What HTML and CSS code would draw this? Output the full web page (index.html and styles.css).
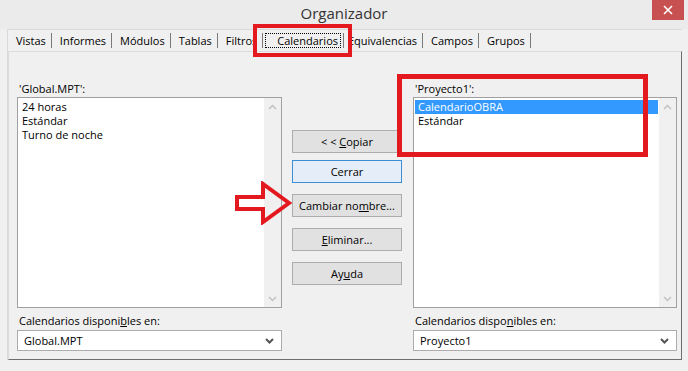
FILE: index.html
```html
<!DOCTYPE html>
<html lang="es">
<head>
<meta charset="utf-8">
<title>Organizador</title>
<link rel="stylesheet" href="styles.css">
</head>
<body>
<div class="window">
  <header class="titlebar">
    <span></span>
    <h1 class="title">Organizador</h1>
    <div class="close">
      <svg width="10" height="10" viewBox="0 0 10 10"><path d="M1 1 L9 9 M9 1 L1 9" stroke="#fff" stroke-width="1.6" fill="none"/></svg>
    </div>
  </header>
  <div class="frame">
    <nav class="tabs">
      <span class="tab">Vistas</span>
      <span class="tab">Informes</span>
      <span class="tab">Módulos</span>
      <span class="tab">Tablas</span>
      <span class="tab">Filtros</span>
      <span class="tab tab-active"><span class="focus">Calendarios</span></span>
      <span class="tab tab-after">Equivalencias</span>
      <span class="tab">Campos</span>
      <span class="tab">Grupos</span>
    </nav>
    <section class="panel">
      <div class="col">
        <div class="lbl">'Global.MPT':</div>
        <div class="listbox">
          <ul class="items">
            <li>24 horas</li>
            <li>Estándar</li>
            <li>Turno de noche</li>
          </ul>
          <div class="vscroll">
            <svg width="9" height="6" viewBox="0 0 9 6"><path d="M1 5 L4.5 1.5 L8 5" stroke="#c2c2c2" stroke-width="1.5" fill="none"/></svg>
            <svg width="9" height="6" viewBox="0 0 9 6"><path d="M1 1 L4.5 4.5 L8 1" stroke="#c2c2c2" stroke-width="1.5" fill="none"/></svg>
          </div>
        </div>
        <div class="lbl lbl-bottom">Calendarios disponi<u>b</u>les en:</div>
        <div class="combo">
          <span>Global.MPT</span>
          <svg width="9" height="6" viewBox="0 0 9 6"><path d="M1 1 L4.5 4.5 L8 1" stroke="#555" stroke-width="2" fill="none"/></svg>
        </div>
      </div>
      <div class="buttons">
        <div class="btn btn-first"><span>&lt; &lt; <u>C</u>opiar</span></div>
        <div class="btn btn-focus"><span>Cerrar</span></div>
        <div class="btn"><span>Cambiar no<u>m</u>bre...</span></div>
        <div class="btn"><span><u>E</u>liminar...</span></div>
        <div class="btn"><span>Ay<u>u</u>da</span></div>
      </div>
      <div class="col col-right">
        <div class="lbl">'Proyecto1':</div>
        <div class="listbox">
          <ul class="items">
            <li class="sel">CalendarioOBRA</li>
            <li>Estándar</li>
          </ul>
          <div class="vscroll">
            <svg width="9" height="6" viewBox="0 0 9 6"><path d="M1 5 L4.5 1.5 L8 5" stroke="#c2c2c2" stroke-width="1.5" fill="none"/></svg>
            <svg width="9" height="6" viewBox="0 0 9 6"><path d="M1 1 L4.5 4.5 L8 1" stroke="#c2c2c2" stroke-width="1.5" fill="none"/></svg>
          </div>
        </div>
        <div class="lbl lbl-bottom">Calendarios dispo<u>n</u>ibles en:</div>
        <div class="combo">
          <span>Proyecto1</span>
          <svg width="9" height="6" viewBox="0 0 9 6"><path d="M1 1 L4.5 4.5 L8 1" stroke="#555" stroke-width="2" fill="none"/></svg>
        </div>
      </div>
    </section>
  </div>
  <div class="mark mark-tab"></div>
  <div class="mark mark-list"></div>
  <svg class="arrow" width="60" height="44" viewBox="0 0 60 44"><polygon points="3,16 29,16 29,3 55,22 29,41 29,28 3,28" fill="none" stroke="#e3191f" stroke-width="4"/></svg>
</div>
</body>
</html>
```

FILE: styles.css
```css
html, body {
  margin: 0;
  padding: 0;
}
body {
  width: 688px;
  height: 371px;
  overflow: hidden;
  background: #f0f0f0;
  font-family: "Open Sans", "Noto Sans", sans-serif;
  font-size: 11px;
  color: #000;
}
.window {
  position: relative;
  height: 371px;
  display: flex;
  flex-direction: column;
}
.titlebar {
  height: 29px;
  display: grid;
  grid-template-columns: 1fr auto 1fr;
  align-items: start;
  background: #ebebeb;
}
.title {
  margin: 0;
  font-weight: 400;
  font-size: 15px;
  line-height: 27px;
  color: #333;
}
.close {
  justify-self: end;
  width: 32px;
  height: 20px;
  margin-right: 4px;
  background: #c75050;
  display: flex;
  align-items: center;
  justify-content: center;
}
.frame {
  margin: 0 6px 0 7px;
  display: flex;
  flex-direction: column;
  border-top: 1px solid #d9d9d9;
  border-left: 1px solid #d9d9d9;
}
.tabs {
  display: flex;
  align-items: center;
  height: 21px;
}
.tab {
  padding: 0 5px 0 8px;
  line-height: 15px;
  border-right: 1px solid #7a7a7a;
}
.tab-active {
  padding: 0 2px 0 2px;
}
.tab-after {
  padding-left: 4px;
}
.focus {
  display: inline-block;
  padding: 0 3px 0 12px;
  outline: 1px dotted #000;
  outline-offset: -1px;
}
.panel {
  height: 309px;
  box-sizing: border-box;
  border: 1px solid;
  border-color: #dcdcdc #6d6d6d #6d6d6d #dcdcdc;
  padding: 30px 4px 8px 8px;
  display: flex;
  gap: 10px;
}
.col {
  width: 265px;
  display: flex;
  flex-direction: column;
}
.col-right {
  width: 264px;
  margin-left: 1px;
}
.lbl {
  line-height: 14px;
  padding-left: 2px;
}
.lbl-bottom {
  margin-top: 6px;
}
.listbox {
  height: 214px;
  box-sizing: border-box;
  margin-top: 1px;
  border: 1px solid #a0a0a0;
  background: #fff;
  display: flex;
}
.items {
  flex: 1;
  list-style: none;
  margin: 0;
  padding: 2px 1px 0 1px;
}
.items li {
  line-height: 14px;
  padding-left: 3px;
}
.items li.sel {
  background: #3399ff;
  color: #fff;
}
.vscroll {
  width: 17px;
  background: #f0f0f0;
  display: flex;
  flex-direction: column;
  justify-content: space-between;
  align-items: center;
  padding: 6px 0 5px;
}
.combo {
  margin-top: 2px;
  height: 21px;
  box-sizing: border-box;
  border: 1px solid #acacac;
  background: #fff;
  display: flex;
  align-items: center;
  justify-content: space-between;
  padding: 0 7px 0 6px;
}
.buttons {
  width: 110px;
  padding-top: 48px;
  display: flex;
  flex-direction: column;
  gap: 11px;
}
.btn {
  height: 23px;
  box-sizing: border-box;
  border: 1px solid #adadad;
  background: #e1e1e1;
  display: flex;
  align-items: center;
  justify-content: center;
  white-space: pre;
}
.btn-first {
  margin-bottom: -4px;
}
.btn-focus {
  border-color: #3c8fd6;
  background: #e5eef8;
}
.mark {
  position: absolute;
  border: 4px solid #e3191f;
  box-sizing: border-box;
}
.mark-tab {
  left: 253px;
  top: 24px;
  width: 99px;
  height: 33px;
}
.mark-list {
  left: 397px;
  top: 74px;
  width: 251px;
  height: 83px;
  border-width: 5px;
}
.arrow {
  position: absolute;
  left: 234px;
  top: 181px;
}
```
